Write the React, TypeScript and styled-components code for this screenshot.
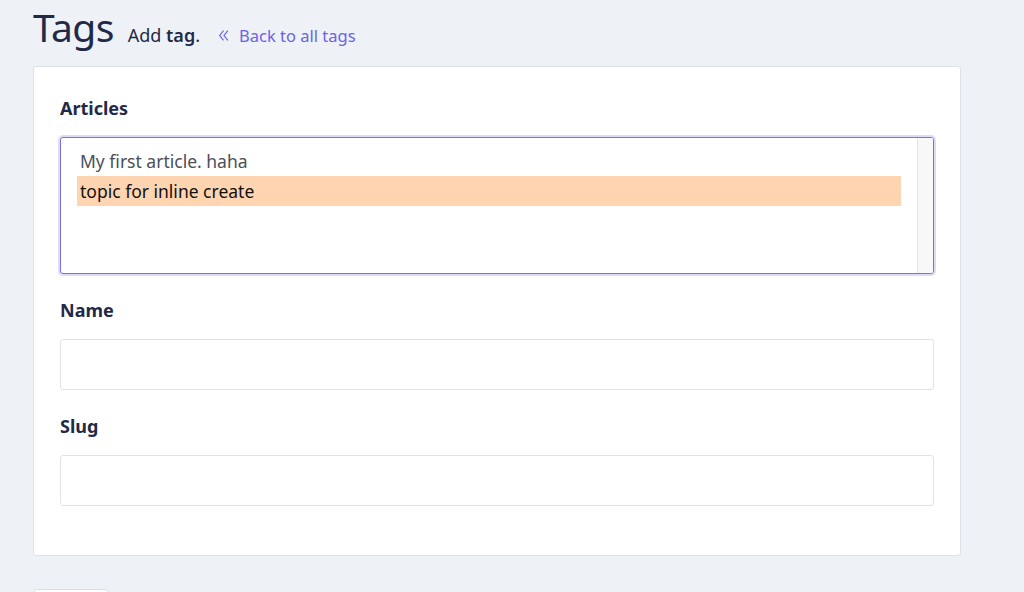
import styled, { createGlobalStyle } from "styled-components";

const articles = [
  { id: 1, title: "My first article. haha", selected: false },
  { id: 2, title: "topic for inline create", selected: true },
];

const GlobalStyle = createGlobalStyle`
  html, body {
    margin: 0;
    padding: 0;
    background: #eef1f6;
    font-family: "Noto Sans", "Liberation Sans", sans-serif;
  }
`;

const App = () => {
  return (
    <Page>
      <GlobalStyle />
      <Header>
        <Title>Tags</Title>
        <Subtitle>
          Add <b>tag</b>.
        </Subtitle>
        <BackLink href="#">
          <svg width="13" height="13" viewBox="0 0 12 12" fill="none">
            <path d="M6 1.5L2.5 6L6 10.5M10 1.5L6.5 6L10 10.5" stroke="currentColor" strokeWidth="1.1" />
          </svg>
          Back to all tags
        </BackLink>
      </Header>
      <Card>
        <Field>
          <Label>Articles</Label>
          <ListBox>
            <Options>
              {articles.map((a) => (
                <Option key={a.id} selected={a.selected}>
                  {a.title}
                </Option>
              ))}
            </Options>
            <Track />
          </ListBox>
        </Field>
        <Field>
          <Label>Name</Label>
          <Input />
        </Field>
        <Field>
          <Label>Slug</Label>
          <Input />
        </Field>
      </Card>
      <SaveButton />
    </Page>
  );
};

export default App;

const Page = styled.div`
  padding: 0 63px 0 33px;
  height: 592px;
  overflow: hidden;
  box-sizing: border-box;
`;

const Header = styled.div`
  display: flex;
  align-items: baseline;
  height: 66px;
`;

const Title = styled.h1`
  margin: 0;
  font-size: 39px;
  font-weight: 400;
  line-height: normal;
  color: #1f2a48;
  letter-spacing: -0.6px;
`;

const Subtitle = styled.span`
  margin-left: 14px;
  font-size: 18px;
  color: #1f2a48;
  b {
    font-weight: 600;
  }
`;

const BackLink = styled.a`
  margin-left: 17px;
  display: inline-flex;
  align-items: center;
  gap: 9px;
  font-size: 16.5px;
  color: #6c63e6;
  text-decoration: none;
`;

const Card = styled.div`
  background: #fff;
  border: 1px solid #dde2ea;
  border-radius: 3px;
  padding: 28px 26px 26px;
`;

const Field = styled.div`
  margin-bottom: 23px;
`;

const Label = styled.div`
  font-size: 18px;
  font-weight: 700;
  line-height: 27px;
  color: #1f2a48;
  margin-bottom: 15px;
`;

const ListBox = styled.div`
  display: flex;
  height: 137px;
  box-sizing: border-box;
  border: 1px solid #7c70e2;
  border-radius: 3px;
  box-shadow: 0 0 0 2px #dedafa;
  overflow: hidden;
`;

const Options = styled.div`
  flex: 1;
  padding: 8px 16px;
`;

const Option = styled.div<{ selected?: boolean }>`
  height: 30px;
  line-height: 30px;
  padding-left: 3px;
  font-size: 17.5px;
  color: ${(p) => (p.selected ? "#111" : "#4a4f5a")};
  background: ${(p) => (p.selected ? "#fed5b0" : "transparent")};
`;

const Track = styled.div`
  width: 15px;
  background: #f8f8f8;
  border-left: 1px solid #e4e4e4;
`;

const Input = styled.input`
  display: block;
  width: 100%;
  height: 51px;
  box-sizing: border-box;
  border: 1px solid #dfe3ea;
  border-radius: 3px;
  background: #fff;
  outline: none;
`;

const SaveButton = styled.button`
  display: block;
  margin-top: 33px;
  width: 76px;
  height: 40px;
  background: #fff;
  border: 1px solid #d8dde6;
  border-radius: 4px;
`;
